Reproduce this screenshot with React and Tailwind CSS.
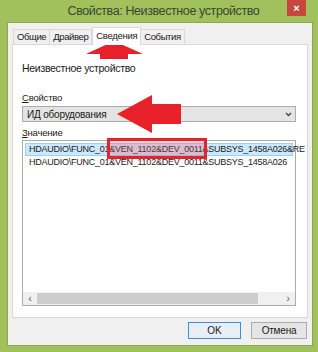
import React from 'react';

const font = { fontFamily: '"Liberation Sans", Arial, sans-serif' };

const Tab = ({ label, active }) =>
	active ? (
		<div className="h-[18px] -mb-px px-[3px] border border-b-0 border-[#d9d9d9] bg-white text-[9.5px] leading-[16px] tracking-[-0.3px] text-[#1a1a1a] relative z-10">
			{label}
		</div>
	) : (
		<div className="h-[15px] px-[3px] border border-b-0 border-[#d9d9d9] bg-[#f0f0f0] text-[9.5px] leading-[14px] tracking-[-0.4px] text-[#1a1a1a] -ml-px first:ml-0">
			{label}
		</div>
	);

export default function App() {
	return (
		<div className="w-[318px] h-[352px] bg-[#a0c15c] flex flex-col relative overflow-hidden" style={font}>
			{/* title bar */}
			<div className="h-[22px] flex items-center relative">
				<div className="flex-1 text-center text-[12.5px] leading-none text-[#3b4632] pl-[9px] tracking-[-0.4px]">
					Свойства: Неизвестное устройство
				</div>
				<div className="absolute right-[12px] top-0 w-[19px] h-[16px] bg-[#c7463d] flex items-center justify-center text-white text-[11px] leading-none font-bold">
					×
				</div>
			</div>

			{/* client area */}
			<div className="ml-[7px] mr-[5px] mb-[6px] flex-1 bg-[#f0f0f0] border border-[#8ba84f] flex flex-col px-[4px] pt-[3px]">
				<div className="flex items-end pl-[1px] h-[18px]">
					<Tab label="Общие" />
					<Tab label="Драйвер" />
					<Tab label="Сведения" active />
					<Tab label="События" />
				</div>
				<div className="h-[274px] bg-white border border-[#d9d9d9] flex flex-col pl-[9px] pr-[11px]">
					<div className="mt-[15px] text-[10.5px] leading-[16px] tracking-[-0.3px] text-[#1a1a1a]">Неизвестное устройство</div>
					<div className="mt-[15px] text-[9.5px] leading-[14px] tracking-[-0.2px] text-[#1a1a1a]">
						<span className="underline">С</span>войство
					</div>
					<div className="mt-[1px] h-[16px] border border-[#acacac] bg-[#e4e4e4] flex items-center pl-[4px] pr-[3px] text-[10px] tracking-[-0.2px] text-[#1a1a1a]">
						<span className="flex-1">ИД оборудования</span>
						<svg width="7" height="5" viewBox="0 0 7 5">
							<path d="M1 1l2.5 2.5L6 1" stroke="#444" strokeWidth="1.3" fill="none" />
						</svg>
					</div>
					<div className="mt-[4px] text-[9.5px] leading-[14px] tracking-[-0.2px] text-[#1a1a1a]">
						<span className="underline">З</span>начение
					</div>
					<div className="h-[166px] border border-[#acacac] bg-white flex flex-col p-[2px]">
						<div className="h-[13px] bg-[#cce8ff] border border-[#99d1ff] pl-[3px] text-[9px] leading-[11px] whitespace-nowrap text-[#1a1a1a] tracking-[-0.25px]">
							HDAUDIO\FUNC_01&VEN_1102&DEV_0011&SUBSYS_1458A026&RE
						</div>
						<div className="h-[13px] pl-[4px] text-[9px] leading-[13px] whitespace-nowrap text-[#1a1a1a] tracking-[-0.25px]">
							HDAUDIO\FUNC_01&VEN_1102&DEV_0011&SUBSYS_1458A026
						</div>
						<div className="flex-1" />
						<div className="h-[13px] flex items-center bg-[#f0f0f0] -mx-[2px] -mb-[2px]">
							<span className="w-[14px] text-center text-[11px] leading-none text-[#606060]">‹</span>
							<div className="w-[221px] h-[11px] bg-[#cdcdcd]" />
							<div className="flex-1" />
							<span className="w-[14px] text-center text-[11px] leading-none text-[#606060]">›</span>
						</div>
					</div>
				</div>
				<div className="flex justify-end gap-[10px] mt-[4px] pr-[1px]">
					<div className="w-[53px] h-[17px] border border-[#3c8fd6] bg-[#e8eef5] text-[10px] leading-[15px] text-center text-[#1a1a1a]">OK</div>
					<div className="w-[56px] h-[17px] border border-[#adadad] bg-[#e5e5e5] text-[10px] leading-[15px] text-center text-[#1a1a1a] tracking-[-0.2px]">Отмена</div>
				</div>
			</div>

			{/* annotations: red box and arrows */}
			<div className="absolute left-[107px] top-[138px] w-[100px] h-[21px] border-[3px] border-[#e0262c] bg-[#f25a63]/30 pointer-events-none" />
			<svg className="absolute left-0 top-0 pointer-events-none" width="318" height="352">
				<path d="M114 41 L143 54 L128 54 L128 59 L100 59 L100 54 L86 54 Z" fill="#e8202a" />
				<path d="M117 114 L152 95 L152 104 L181 104 L181 124 L152 124 L152 133 Z" fill="#e8202a" />
			</svg>
		</div>
	);
}
